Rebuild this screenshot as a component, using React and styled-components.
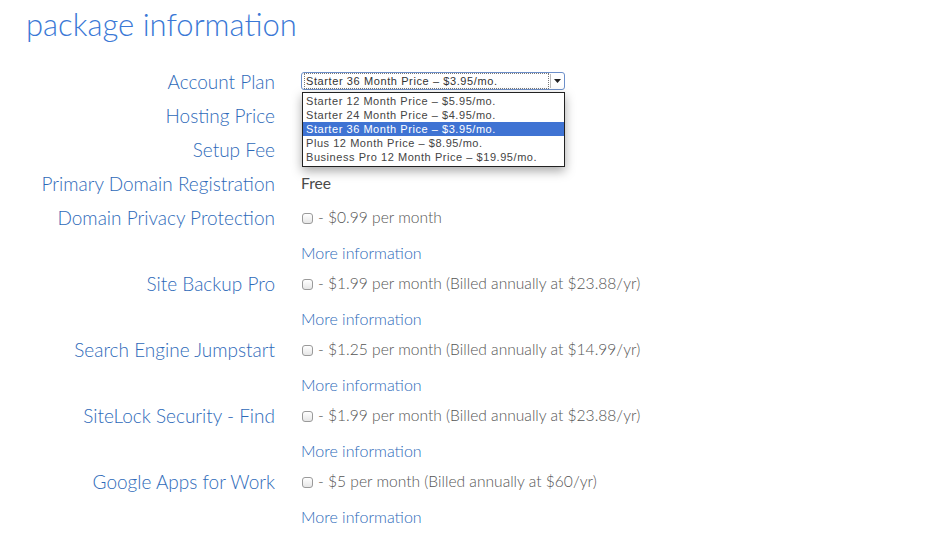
import styled, { createGlobalStyle } from 'styled-components';

const GlobalStyle = createGlobalStyle`
  html, body {
    margin: 0;
    padding: 0;
    background: #fff;
  }
  body {
    font-family: Lato, "Open Sans", sans-serif;
  }
`;

const Page = styled.div`
  width: 939px;
  height: 536px;
  overflow: hidden;
  padding-left: 26px;
  box-sizing: border-box;
`;

const Heading = styled.h1`
  margin: 0;
  height: 64px;
  padding-top: 4px;
  box-sizing: border-box;
  font-size: 31px;
  font-weight: 300;
  color: #3a78d6;
  line-height: 40px;
`;

const Form = styled.div`
  display: flex;
  flex-direction: column;
`;

const Row = styled.div`
  display: grid;
  grid-template-columns: 249px 1fr;
  column-gap: 26px;
  align-items: center;
  height: ${(p) => (p.$more ? '28px' : '34px')};
  margin-top: ${(p) => (p.$more ? '4px' : '0')};
`;

const Label = styled.div`
  text-align: right;
  font-size: 19px;
  font-weight: 300;
  color: #2e6ab9;
  white-space: nowrap;
`;

const Value = styled.div`
  position: relative;
  display: flex;
  align-items: center;
  gap: 5px;
  font-size: 15.6px;
  font-weight: 300;
  color: #555;
  white-space: nowrap;
`;

const Free = styled.span`
  font-weight: 400;
  color: #4a4a4a;
`;

const MoreLink = styled.a`
  font-size: 16px;
  font-weight: 300;
  color: #2e6ab9;
  text-decoration: none;
`;

const Check = styled.span`
  display: inline-block;
  width: 11px;
  height: 11px;
  margin-left: 1px;
  margin-top: 2px;
  border: 1px solid #9a9a9a;
  border-radius: 3px;
  box-sizing: border-box;
  background: linear-gradient(#ffffff, #e6e6e6);
`;

const Select = styled.div`
  position: relative;
  width: 264px;
  height: 18px;
  box-sizing: border-box;
  border: 1px solid #6d8fc9;
  border-radius: 3px;
  background: #fff;
  font-family: "Liberation Sans", Arial, sans-serif;
  font-size: 11px;
  letter-spacing: 0.6px;
  color: #333;
  display: flex;
  align-items: center;
  padding-left: 3px;
`;

const SelectText = styled.span`
  flex: 1;
  outline: 1px dotted #777;
  outline-offset: 0px;
  margin-right: 2px;
  line-height: 14px;
  padding-left: 1px;
`;

const Arrow = styled.span`
  width: 13px;
  height: 14px;
  border-left: 1px solid #bbb;
  display: flex;
  align-items: center;
  justify-content: center;
`;

const Menu = styled.ul`
  position: absolute;
  top: 20px;
  left: 1px;
  width: 263px;
  margin: 0;
  padding: 1px 0 2px;
  list-style: none;
  background: #fff;
  border: 1px solid #222;
  box-sizing: border-box;
  box-shadow: 0 4px 10px rgba(0, 0, 0, 0.35);
  font-family: "Liberation Sans", Arial, sans-serif;
  font-size: 11px;
  letter-spacing: 0.55px;
  z-index: 2;
`;

const Option = styled.li`
  height: 14px;
  line-height: 14px;
  padding-left: 3px;
  color: ${(p) => (p.$active ? '#fff' : '#444')};
  background: ${(p) => (p.$active ? '#3f73d3' : 'transparent')};
`;

const plans = [
  'Starter 12 Month Price – $5.95/mo.',
  'Starter 24 Month Price – $4.95/mo.',
  'Starter 36 Month Price – $3.95/mo.',
  'Plus 12 Month Price – $8.95/mo.',
  'Business Pro 12 Month Price – $19.95/mo.',
];

const extras = [
  { label: 'Domain Privacy Protection', price: '- $0.99 per month' },
  { label: 'Site Backup Pro', price: '- $1.99 per month (Billed annually at $23.88/yr)' },
  { label: 'Search Engine Jumpstart', price: '- $1.25 per month (Billed annually at $14.99/yr)' },
  { label: 'SiteLock Security - Find', price: '- $1.99 per month (Billed annually at $23.88/yr)' },
  { label: 'Google Apps for Work', price: '- $5 per month (Billed annually at $60/yr)' },
];

const App = () => {
  return (
    <Page>
      <GlobalStyle />
      <Heading>package information</Heading>
      <Form>
        <Row>
          <Label>Account Plan</Label>
          <Value>
            <Select>
              <SelectText>Starter 36 Month Price – $3.95/mo.</SelectText>
              <Arrow>
                <svg width="7" height="4" viewBox="0 0 7 4">
                  <path d="M0 0h7L3.5 4z" fill="#222" />
                </svg>
              </Arrow>
            </Select>
            <Menu>
              {plans.map((plan, i) => (
                <Option key={plan} $active={i === 2}>
                  {plan}
                </Option>
              ))}
            </Menu>
          </Value>
        </Row>
        <Row>
          <Label>Hosting Price</Label>
          <Value />
        </Row>
        <Row>
          <Label>Setup Fee</Label>
          <Value />
        </Row>
        <Row>
          <Label>Primary Domain Registration</Label>
          <Value>
            <Free>Free</Free>
          </Value>
        </Row>
        {extras.map((item) => (
          <div key={item.label}>
            <Row>
              <Label>{item.label}</Label>
              <Value>
                <Check />
                <span>{item.price}</span>
              </Value>
            </Row>
            <Row $more>
              <span />
              <MoreLink href="#">More information</MoreLink>
            </Row>
          </div>
        ))}
      </Form>
    </Page>
  );
};

export default App;
